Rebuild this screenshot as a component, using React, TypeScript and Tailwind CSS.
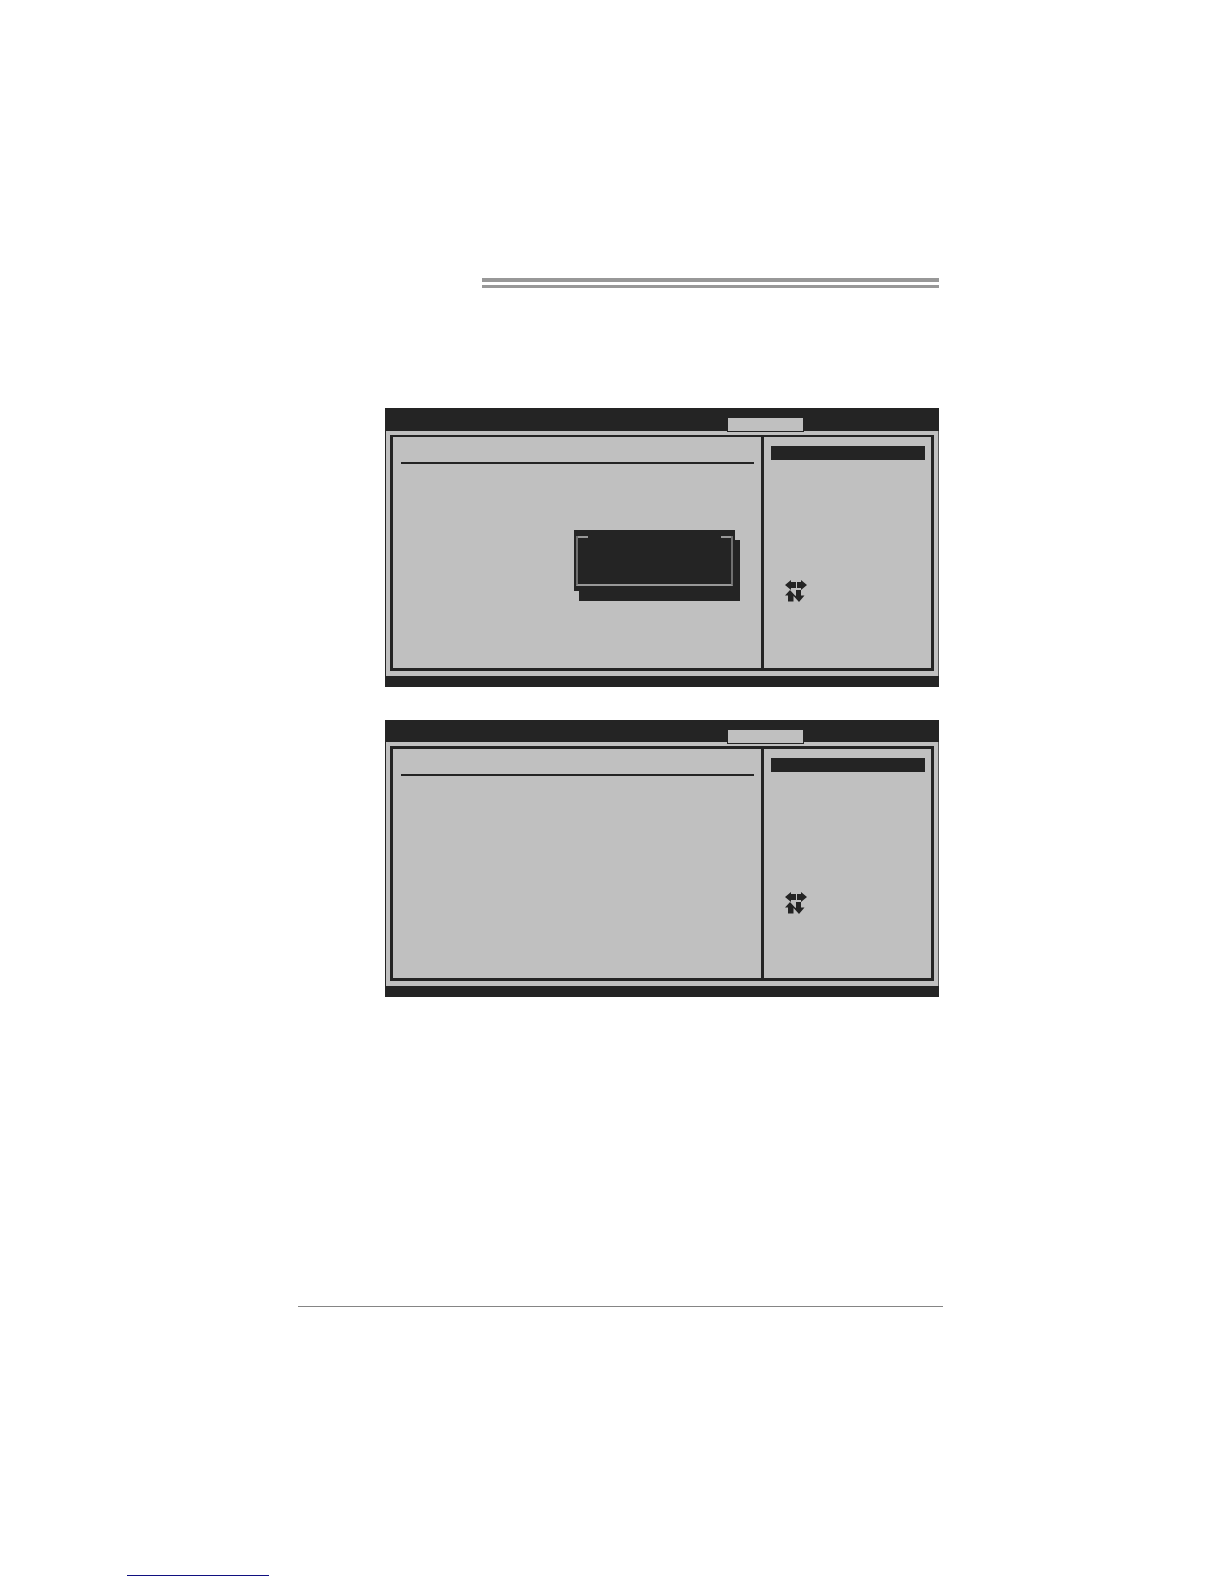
import React from 'react';

interface SetupScreenProps {
  className: string;
  headerClass: string;
  frameClass: string;
  children?: React.ReactNode;
}

const ArrowKeys: React.FC = () => (
  <svg width="22" height="22" viewBox="0 0 22 22" fill="#242424" aria-hidden="true">
    <path d="M0 5 L6 0 V2 H11 V8 H6 V10 Z" />
    <path d="M22 5 L16 0 V2 H12 V8 H16 V10 Z" />
    <path d="M5 10 L10 15.5 L11 16 V10 H16 V15.5 H19.5 L14 22 L9.5 17 L8.5 16 V21.5 H3 V15.5 H0 Z" />
  </svg>
);

const SetupScreen: React.FC<SetupScreenProps> = ({ className, headerClass, frameClass, children }) => {
  return (
    <section className={`flex flex-col bg-[#242424] ${className}`}>
      {/* Menu bar with the selected tab */}
      <div className={`flex justify-end pt-[10px] pr-[135px] ${headerClass}`}>
        <div className="z-10 h-[14px] w-[77px] border border-t-0 border-[#242424] bg-[#c0c0c0]" />
      </div>

      <div className="flex flex-1 border-x border-r-[#5a5a5a] border-l-[#242424] bg-[#c0c0c0] px-1 pt-1 pb-[5px]">
        <div className={`flex flex-1 border-x-[3px] border-b-[3px] border-[#242424] ${frameClass}`}>
          <div className="relative flex-1 pt-[25px] pr-[7px] pl-2">
            <div className="h-[2px] bg-[#242424]" />
            {children}
          </div>

          {/* Help column */}
          <div className="w-[170px] border-l-[3px] border-[#242424] pt-[9px] pr-[6px] pl-[7px]">
            <div className="h-[14px] bg-[#242424]" />
            <div className="pt-[120px] pl-[14px]">
              <ArrowKeys />
            </div>
          </div>
        </div>
      </div>

      <div className="h-[11px]" />
    </section>
  );
};

const Dialog: React.FC = () => (
  <div
    role="dialog"
    className="absolute top-[93px] right-[26px] h-[61px] w-[161px] bg-[#242424] px-[2px] pt-[6px] pb-1 shadow-[5px_10px_0_#242424]"
  >
    <div className="flex h-[50px] justify-between border-x-2 border-b-2 border-x-[#707070] border-b-[#989898]">
      <div className="h-[2px] w-[10px] bg-[#989898]" />
      <div className="h-[2px] w-[10px] bg-[#989898]" />
    </div>
  </div>
);

const App: React.FC = () => {
  return (
    <main className="min-h-screen bg-white pt-[278px] pb-2 font-['Liberation_Sans',sans-serif]">
      <div className="pr-[285px] pl-[385px]">
        <div className="ml-[97px] h-[10px] border-t-4 border-b-[3px] border-[#989898]" />
        <div className="flex flex-col gap-[33px] pt-[120px]">
          <SetupScreen className="h-[279px]" headerClass="h-[23px]" frameClass="border-t-2">
            <Dialog />
          </SetupScreen>
          <SetupScreen className="h-[277px]" headerClass="h-[22px]" frameClass="border-t-[3px]" />
        </div>
      </div>

      <hr className="mt-[309px] mr-[281px] ml-[298px] border-[#858585]" />
      <div className="mt-[268px] ml-[127px] h-px w-[142px] bg-[#101080]" />
    </main>
  );
};

export default App;
